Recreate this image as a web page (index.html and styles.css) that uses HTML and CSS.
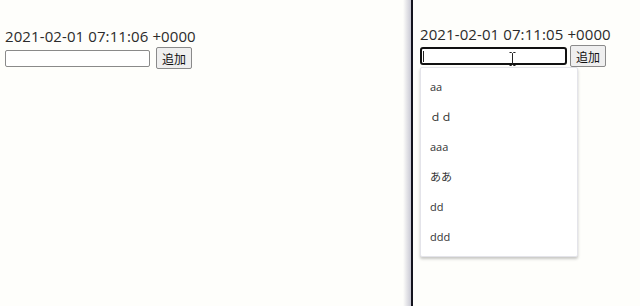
FILE: index.html
```html
<html lang="ja">
  <head>
    <meta charset="UTF-8" />
    <meta name="viewport" content="width=device-width, initial-scale=1.0" />
    <title>Document</title>
    <link rel="stylesheet" href="styles.css">
  </head>
  <body>
    <div class="screen">
      <div class="pane pane-left">
        <div class="stamp">2021-02-01 07:11:06 +0000</div>
        <div class="form-row">
          <input class="text-input" type="text" />
          <button class="add-btn">追加</button>
        </div>
      </div>
      <div class="shade"></div>
      <div class="rule"></div>
      <div class="pane pane-right">
        <div class="stamp">2021-02-01 07:11:05 +0000</div>
        <div class="form-row">
          <div class="input-wrap">
            <input class="text-input focused" type="text" list="words" />
            <span class="caret"></span>
            <svg class="ibeam" width="7" height="14" viewBox="0 0 7 14">
              <path d="M0.5 0.5 H2.5 L3.5 1.5 L4.5 0.5 H6.5 M3.5 1.5 V12.5 M0.5 13.5 H2.5 L3.5 12.5 L4.5 13.5 H6.5" fill="none" stroke="#222" stroke-width="1"/>
            </svg>
            <ul class="suggest">
              <li>aa</li>
              <li>ｄｄ</li>
              <li>aaa</li>
              <li>ああ</li>
              <li>dd</li>
              <li>ddd</li>
            </ul>
          </div>
          <button class="add-btn">追加</button>
        </div>
      </div>
    </div>
  </body>
</html>
```

FILE: styles.css
```css
body {
  margin: 0;
  background: #fefefb;
  font-family: "Open Sans", "Noto Sans CJK JP", sans-serif;
  color: #2b2b2b;
}

.screen {
  display: flex;
  height: 306px;
  overflow: hidden;
}

.pane {
  box-sizing: border-box;
}

.pane-left {
  width: 403px;
  padding: 27px 0 0 5px;
}

.shade {
  width: 8px;
  background: linear-gradient(to right, #fefefb, #c9c9d4);
}

.rule {
  width: 2px;
  background: #14141e;
}

.pane-right {
  flex: 1;
  padding: 25px 0 0 7px;
}

.stamp {
  font-size: 15px;
  line-height: 18px;
  letter-spacing: 0.1px;
}

.form-row {
  display: flex;
  align-items: center;
  gap: 6px;
  margin-top: 2px;
}

.pane-right .form-row {
  gap: 3px;
}

.input-wrap {
  position: relative;
  display: flex;
}

.text-input {
  box-sizing: border-box;
  width: 145px;
  height: 17px;
  margin: 0;
  padding: 0 2px;
  border: 1px solid #8a8a8a;
  border-radius: 2px;
  background: #fff;
}

.text-input.focused {
  width: 147px;
  height: 18px;
  border: 2px solid #111;
  border-radius: 3px;
}

.caret {
  position: absolute;
  left: 3px;
  top: 4px;
  width: 1px;
  height: 11px;
  background: #222;
}

.ibeam {
  position: absolute;
  left: 89px;
  top: 5px;
}

.add-btn {
  box-sizing: border-box;
  width: 36px;
  height: 22px;
  margin: 0;
  padding: 0;
  font-family: "Noto Sans CJK JP", sans-serif;
  font-size: 12px;
  color: #111;
  background: #efefef;
  border: 1px solid #8a8a8a;
  border-radius: 2px;
}

.suggest {
  position: absolute;
  left: 0;
  top: 20px;
  width: 158px;
  margin: 0;
  padding: 4px 0 4px;
  list-style: none;
  background: #fff;
  border: 1px solid #e4e4ea;
  border-radius: 2px;
  box-shadow: 0 2px 3px rgba(0, 0, 0, 0.22);
  box-sizing: border-box;
}

.suggest li {
  height: 30px;
  line-height: 30px;
  padding-left: 9px;
  font-size: 11px;
  color: #333;
}
```
